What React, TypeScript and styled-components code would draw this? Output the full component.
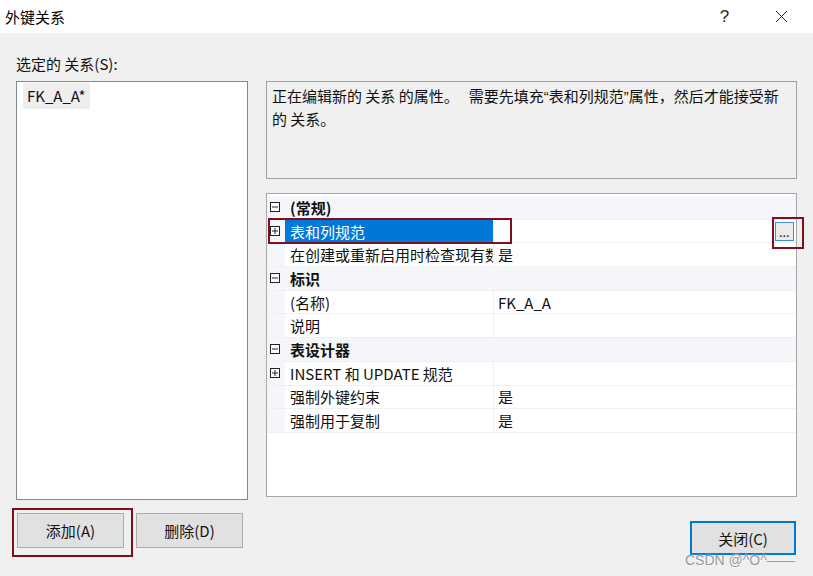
import React from "react";
import styled, { createGlobalStyle, css } from "styled-components";

const FONT = `"Noto Sans CJK SC", "Noto Sans", sans-serif`;

const GlobalStyle = createGlobalStyle`
  html, body { margin: 0; padding: 0; background: #f0f0f0; }
  body { font-family: ${FONT}; }
  * { box-sizing: border-box; }
`;

const Window = styled.div`
  position: relative;
  width: 813px;
  height: 576px;
  overflow: hidden;
  background: #f0f0f0;
  display: flex;
  flex-direction: column;
  font-family: ${FONT};
  font-size: 15px;
  color: #111;
`;

const TitleBar = styled.div`
  height: 33px;
  flex: none;
  background: #fff;
  display: flex;
  align-items: center;
  padding-left: 5px;
  padding-right: 3px;
`;

const Title = styled.div`
  flex: 1;
  font-size: 15px;
  line-height: 20px;
  color: #000;
`;

const TitleButton = styled.div`
  width: 57px;
  height: 33px;
  display: flex;
  align-items: center;
  justify-content: center;
  font-family: "Liberation Sans", sans-serif;
  font-size: 17px;
  color: #222;
`;

const Body = styled.div`
  flex: 1;
  display: grid;
  grid-template-columns: 232px 531px;
  grid-template-rows: 48px 419px auto;
  column-gap: 18px;
  padding-left: 16px;
`;

const SectionLabel = styled.div`
  grid-column: 1;
  grid-row: 1;
  padding-top: 20px;
  line-height: 22px;
  font-size: 15px;
`;

const ListBox = styled.div`
  grid-column: 1;
  grid-row: 2;
  background: #fff;
  border: 1px solid #828790;
  padding: 1px 0 0 6px;
`;

const ListItem = styled.div`
  display: inline-block;
  height: 26px;
  line-height: 26px;
  padding: 0 5px 0 4px;
  background: #eeeeee;
  font-size: 15px;
`;

const RightColumn = styled.div`
  grid-column: 2;
  grid-row: 2;
  display: flex;
  flex-direction: column;
  gap: 14px;
`;

const Description = styled.div`
  height: 98px;
  border: 1px solid #a0a0a0;
  background: #f0f0f0;
  padding: 3px 5px 0 5px;
  line-height: 22px;
  font-size: 15px;
  white-space: nowrap;
`;

const Quote = styled.span`
  font-family: "Liberation Sans", sans-serif;
`;

const PropGrid = styled.div`
  position: relative;
  height: 304px;
  border: 1px solid #a7a7a7;
  background: #fff;
  padding-top: 2px;
`;

const Row = styled.div<{ $category?: boolean }>`
  display: grid;
  grid-template-columns: 18px 209px 1fr;
  height: 23.7px;
  border-bottom: 1px solid #f0f0f0;
  ${(p) =>
    p.$category &&
    css`
      background: #f4f6fa;
      font-weight: bold;
    `}
`;

const Gutter = styled.div`
  background: #f4f6fa;
  display: flex;
  align-items: center;
  padding-left: 3px;
`;

const NameCell = styled.div<{ $selected?: boolean; $span?: boolean }>`
  display: flex;
  align-items: center;
  padding-left: 5px;
  overflow: hidden;
  white-space: nowrap;
  font-size: 15px;
  border-right: 1px solid ${(p) => (p.$span ? "transparent" : "#f0f0f0")};
  ${(p) => p.$span && css`grid-column: 2 / 4;`}
  ${(p) =>
    p.$selected &&
    css`
      background: #0078d7;
      color: #fff;
    `}
`;

const ValueCell = styled.div`
  display: flex;
  align-items: center;
  justify-content: space-between;
  padding-left: 4px;
  padding-right: 2px;
  white-space: nowrap;
  font-size: 15px;
`;

const EllipsisButton = styled.div`
  width: 19px;
  height: 19px;
  border: 1px solid #3c8fe0;
  background: #ebebeb;
  display: flex;
  align-items: flex-end;
  justify-content: center;
  font-family: "Liberation Sans", sans-serif;
  font-size: 11px;
  line-height: 14px;
  font-weight: bold;
  color: #333;
  letter-spacing: 0.5px;
`;

const Annotation = styled.div`
  position: absolute;
  border: 2px solid #7f0f1f;
  pointer-events: none;
`;

const ButtonBar = styled.div`
  grid-column: 1 / 3;
  grid-row: 3;
  display: flex;
  justify-content: space-between;
  align-items: flex-start;
  padding-top: 13px;
  padding-left: 1px;
  padding-right: 1px;
`;

const ButtonGroup = styled.div`
  display: flex;
  gap: 12px;
`;

const Marked = styled.div`
  position: relative;
  &::after {
    content: "";
    position: absolute;
    left: -5px;
    top: -5px;
    right: -9px;
    bottom: -9px;
    border: 2px solid #7f0f1f;
  }
`;

const Button = styled.button<{ $primary?: boolean }>`
  width: 107px;
  height: 35px;
  padding: 0;
  background: #e1e1e1;
  border: 1px solid #adadad;
  font-family: ${FONT};
  font-size: 15px;
  color: #111;
  ${(p) =>
    p.$primary &&
    css`
      width: 106px;
      height: 34px;
      margin-top: 8px;
      border: 2px solid #0078d7;
    `}
`;

const Watermark = styled.div`
  position: absolute;
  left: 685px;
  top: 551px;
  font-family: "Liberation Sans", sans-serif;
  font-size: 14px;
  line-height: 18px;
  color: #9a9a9a;
  text-shadow: 0 0 2px #fff;
  white-space: nowrap;
`;

const ExpandIcon = ({ plus }: { plus?: boolean }) => (
  <svg width="10" height="10" viewBox="0 0 10 10">
    <rect x="0.5" y="0.5" width="9" height="9" fill="#fff" stroke="#222" strokeWidth="1" />
    <line x1="2" y1="5" x2="8" y2="5" stroke="#222" strokeWidth="1" />
    {plus && <line x1="5" y1="2" x2="5" y2="8" stroke="#222" strokeWidth="1" />}
  </svg>
);

const CloseGlyph = () => (
  <svg width="13" height="13" viewBox="0 0 13 13">
    <line x1="1" y1="1" x2="12" y2="12" stroke="#222" strokeWidth="1" />
    <line x1="12" y1="1" x2="1" y2="12" stroke="#222" strokeWidth="1" />
  </svg>
);

type RowData =
  | { kind: "cat"; label: string }
  | {
      kind: "prop";
      name: string;
      value?: string;
      expandable?: boolean;
      selected?: boolean;
      ellipsis?: boolean;
    };

const rows: RowData[] = [
  { kind: "cat", label: "(常规)" },
  { kind: "prop", name: "表和列规范", expandable: true, selected: true, ellipsis: true },
  { kind: "prop", name: "在创建或重新启用时检查现有数据", value: "是" },
  { kind: "cat", label: "标识" },
  { kind: "prop", name: "(名称)", value: "FK_A_A" },
  { kind: "prop", name: "说明", value: "" },
  { kind: "cat", label: "表设计器" },
  { kind: "prop", name: "INSERT 和 UPDATE 规范", expandable: true },
  { kind: "prop", name: "强制外键约束", value: "是" },
  { kind: "prop", name: "强制用于复制", value: "是" },
];

export default function App() {
  return (
    <>
      <GlobalStyle />
      <Window>
        <TitleBar>
          <Title>外键关系</Title>
          <TitleButton>?</TitleButton>
          <TitleButton>
            <CloseGlyph />
          </TitleButton>
        </TitleBar>
        <Body>
          <SectionLabel>选定的 关系(S):</SectionLabel>
          <ListBox>
            <ListItem>FK_A_A*</ListItem>
          </ListBox>
          <RightColumn>
            <Description>
              正在编辑新的 关系 的属性。 &nbsp;&nbsp;需要先填充<Quote>“</Quote>表和列规范<Quote>”</Quote>属性，然后才能接受新
              <br />的 关系。
            </Description>
            <PropGrid>
              {rows.map((r, i) =>
                r.kind === "cat" ? (
                  <Row key={i} $category>
                    <Gutter>
                      <ExpandIcon />
                    </Gutter>
                    <NameCell $span>{r.label}</NameCell>
                  </Row>
                ) : (
                  <Row key={i}>
                    <Gutter>{r.expandable && <ExpandIcon plus />}</Gutter>
                    <NameCell $selected={r.selected}>{r.name}</NameCell>
                    <ValueCell>
                      <span>{r.value}</span>
                      {r.ellipsis && <EllipsisButton>...</EllipsisButton>}
                    </ValueCell>
                  </Row>
                )
              )}
              <Annotation style={{ left: 1, top: 24, width: 244, height: 26 }} />
              <Annotation style={{ left: 505, top: 23, width: 32, height: 32 }} />
            </PropGrid>
          </RightColumn>
          <ButtonBar>
            <ButtonGroup>
              <Marked>
                <Button>添加(A)</Button>
              </Marked>
              <Button>删除(D)</Button>
            </ButtonGroup>
            <Button $primary>关闭(C)</Button>
          </ButtonBar>
        </Body>
        <Watermark>CSDN @^O^——</Watermark>
      </Window>
    </>
  );
}
